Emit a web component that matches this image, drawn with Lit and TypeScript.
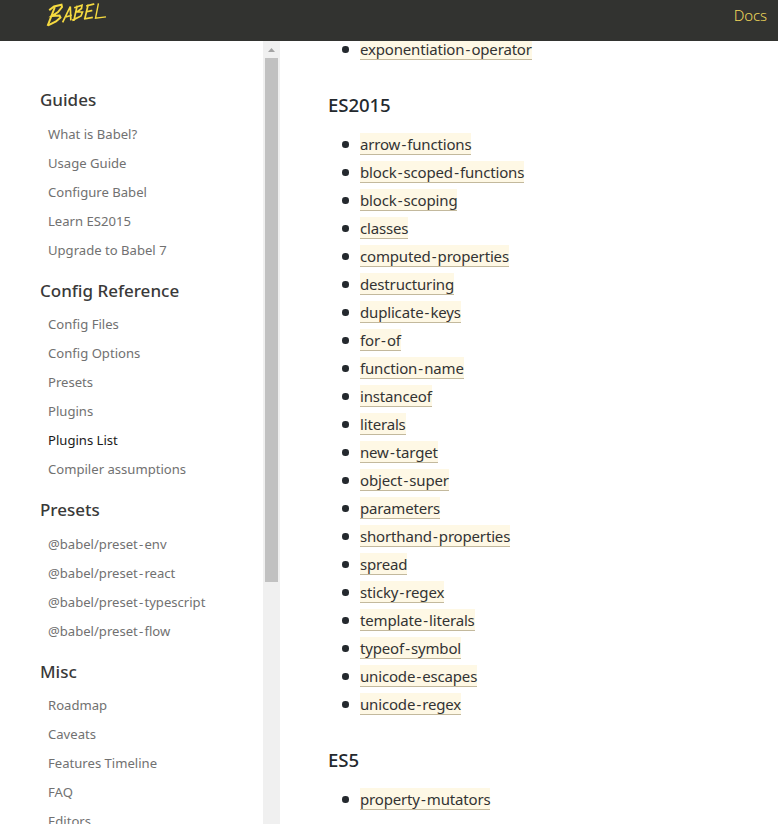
import { LitElement, html, css } from "lit";
import { customElement } from "lit/decorators.js";

interface Group {
  title: string;
  items: string[];
}

const NAV: Group[] = [
  { title: "Guides", items: ["What is Babel?", "Usage Guide", "Configure Babel", "Learn ES2015", "Upgrade to Babel 7"] },
  { title: "Config Reference", items: ["Config Files", "Config Options", "Presets", "Plugins", "Plugins List", "Compiler assumptions"] },
  { title: "Presets", items: ["@babel/preset-env", "@babel/preset-react", "@babel/preset-typescript", "@babel/preset-flow"] },
  { title: "Misc", items: ["Roadmap", "Caveats", "Features Timeline", "FAQ", "Editors"] },
];

const ACTIVE = "Plugins List";

const SECTIONS: Group[] = [
  {
    title: "ES2015",
    items: [
      "arrow-functions", "block-scoped-functions", "block-scoping", "classes", "computed-properties",
      "destructuring", "duplicate-keys", "for-of", "function-name", "instanceof", "literals", "new-target",
      "object-super", "parameters", "shorthand-properties", "spread", "sticky-regex", "template-literals",
      "typeof-symbol", "unicode-escapes", "unicode-regex",
    ],
  },
  { title: "ES5", items: ["property-mutators"] },
];

// Gives hyphens a little more room inside package names.
const spaced = (text: string) =>
  text.split("-").map((part, i) => (i === 0 ? part : html`<span class="hyphen">-</span>${part}`));

@customElement("site-header")
export class SiteHeader extends LitElement {
  static styles = css`
    :host {
      display: flex;
      justify-content: space-between;
      box-sizing: border-box;
      height: 41px;
      padding: 0 11px 0 45px;
      background: #323330;
    }
    .logo {
      width: 63px;
      height: 30px;
      fill: none;
      stroke: #f5da40;
      stroke-linecap: square;
      stroke-linejoin: miter;
    }
    .docs {
      color: #f0d75a;
      font-size: 15px;
      font-weight: 300;
      line-height: 31px;
      letter-spacing: -0.1px;
    }
  `;

  render() {
    return html`
      <svg class="logo" viewBox="45 0 63 30" role="img" aria-label="Babel">
        <g stroke-width="2">
          <path d="M54.5 8 48 25" />
          <path d="M50 9.5 54 6.5 61.5 4.8 62 7 58 12 52 16 59.5 15.5 60.5 17.5 56 21.5 49 25" />
        </g>
        <g stroke-width="1.7">
          <path d="M63 21.5 70.3 6.5 70.8 19.5M65.5 17 71 15.5" />
          <path d="M77 6.5 74 20M75 7.5 82 5.3 81.5 8.5 77 12 82.5 12 81 16 73 20" />
          <path d="M88 5.3 85 18M87 5.8 93.5 4.2M86.5 11.8 91.5 10.7M84.8 18.8 92 17.5" />
        </g>
        <g stroke-width="1.4"><path d="M98.3 4 95.5 18.3 105.3 17" /></g>
      </svg>
      <span class="docs">Docs</span>
    `;
  }
}

@customElement("side-nav")
export class SideNav extends LitElement {
  static styles = css`
    :host {
      display: flex;
      width: 280px;
      overflow: hidden;
    }
    nav {
      flex: 1;
      padding: 33.67px 0 0 40px;
    }
    h3 {
      margin: 0;
      height: 45.33px;
      line-height: 52px;
      font-size: 17px;
      font-weight: 500;
      color: #393939;
      white-space: nowrap;
    }
    h3:first-of-type {
      line-height: 50px;
    }
    ul {
      margin: 0;
      padding: 0 0 0 8px;
      list-style: none;
    }
    li {
      height: 29px;
      line-height: 29px;
      font-size: 13.1px;
      color: #717171;
      white-space: nowrap;
    }
    .hyphen {
      margin: 0 1.2px;
    }
    .active {
      color: #1a1a1a;
    }
    .scrollbar {
      width: 17px;
      background: #f0f0f0;
    }
    .arrow {
      display: block;
      width: 17px;
      height: 17px;
      fill: #a3a3a3;
    }
    .thumb {
      width: 13px;
      height: 524px;
      margin: 0 auto;
      background: #c1c1c1;
    }
  `;

  render() {
    return html`
      <nav>
        ${NAV.map(
          (g) => html`
            <h3>${g.title}</h3>
            <ul>
              ${g.items.map((i) => html`<li class=${i === ACTIVE ? "active" : ""}>${spaced(i)}</li>`)}
            </ul>
          `
        )}
      </nav>
      <div class="scrollbar">
        <svg class="arrow" viewBox="0 0 17 17"><path d="M5 11 8.5 7 12 11Z" /></svg>
        <div class="thumb"></div>
      </div>
    `;
  }
}

@customElement("plugin-list")
export class PluginList extends LitElement {
  static styles = css`
    :host {
      display: block;
      flex: 1;
      padding-left: 48px;
      overflow: hidden;
      color: #24292e;
    }
    .scrolled {
      margin-top: -6px;
    }
    h3 {
      margin: 0;
      height: 67px;
      line-height: 83px;
      font-size: 18.6px;
      font-weight: 550;
      letter-spacing: -0.1px;
    }
    ul {
      margin: 0;
      padding: 0;
      list-style: none;
    }
    li {
      display: flex;
      align-items: center;
      height: 28px;
    }
    li::before {
      content: "";
      width: 6.5px;
      height: 6.5px;
      margin: 0.5px 11.5px 0 14px;
      border-radius: 50%;
      background: #24292e;
    }
    a {
      height: 21px;
      line-height: 22px;
      font-size: 15px;
      font-weight: 400;
      letter-spacing: -0.17px;
      color: #333;
      background: #fef8e5;
      border-bottom: 1px solid #c3b99d;
      white-space: nowrap;
    }
    .hyphen {
      margin: 0 1.2px;
    }
  `;

  render() {
    return html`
      <ul class="scrolled"><li><a>${spaced("exponentiation-operator")}</a></li></ul>
      ${SECTIONS.map(
        (s) => html`
          <h3>${s.title}</h3>
          <ul>
            ${s.items.map((i) => html`<li><a>${spaced(i)}</a></li>`)}
          </ul>
        `
      )}
    `;
  }
}

@customElement("app-root")
export class AppRoot extends LitElement {
  static styles = css`
    :host {
      display: flex;
      flex-direction: column;
      height: 824px;
      overflow: hidden;
      background: #fff;
      font-family: "Noto Sans", "Open Sans", sans-serif;
    }
    main {
      display: flex;
      flex: 1;
      min-height: 0;
    }
  `;

  render() {
    return html`
      <site-header></site-header>
      <main>
        <side-nav></side-nav>
        <plugin-list></plugin-list>
      </main>
    `;
  }
}
